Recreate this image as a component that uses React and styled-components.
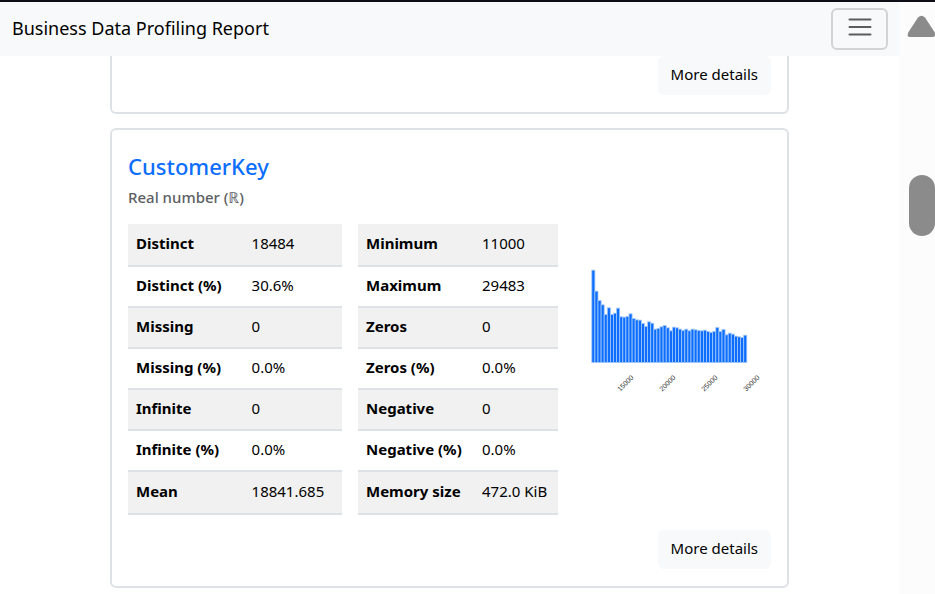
import React from "react";
import styled, { createGlobalStyle } from "styled-components";

const GlobalStyle = createGlobalStyle`
  *, *::before, *::after { box-sizing: border-box; }
  html, body { margin: 0; height: 100%; overflow: hidden; }
  body {
    background: #fff;
    color: #000;
    font-family: "Segoe UI", "Noto Sans", "DejaVu Sans", sans-serif;
    font-size: 15px;
    line-height: 24px;
  }
`;

const Frame = styled.div`
  display: flex;
  height: 100vh;
  border-top: 2px solid #0e0e16;
  overflow: hidden;
`;

const Page = styled.div`
  flex: 1;
  min-width: 0;
`;

const Navbar = styled.header`
  display: flex;
  align-items: center;
  justify-content: space-between;
  height: 54px;
  padding: 0 11px 0 12px;
  background: #f8f9fa;
`;

const Brand = styled.a`
  padding-bottom: 2px;
  color: #000;
  font-size: 18px;
  text-decoration: none;
`;

const MenuButton = styled.button`
  display: flex;
  align-items: center;
  justify-content: center;
  width: 57px;
  height: 42px;
  padding: 0 0 4px;
  border: 2px solid #d2d3d4;
  border-radius: 6px;
  background: transparent;
`;

const Content = styled.main`
  display: flex;
  flex-direction: column;
  gap: 14px;
  padding: 0 110px;
`;

const Card = styled.section`
  display: flex;
  flex-direction: column;
  padding: ${(p) => (p.$continued ? "0 16px 17px" : "22px 16px 17px")};
  border: 2px solid #dee2e6;
  border-top-width: ${(p) => (p.$continued ? "0" : "2px")};
  border-radius: ${(p) => (p.$continued ? "0 0 6px 6px" : "6px")};
`;

const DetailsButton = styled.button`
  align-self: flex-end;
  height: 39px;
  padding: 0 13px 4px;
  border: 0;
  border-radius: 6px;
  background: #f8f9fa;
  color: #000;
  font: inherit;
`;

const VariableName = styled.h2`
  margin: 0;
  font-size: 22px;
  font-weight: 500;
  line-height: 28px;

  a { color: #0d6efd; text-decoration: none; }
`;

const VariableType = styled.p`
  margin: 5px 0 15px;
  color: #5c6064;
  font-weight: 500;
  line-height: 24px;
`;

const Columns = styled.div`
  display: grid;
  grid-template-columns: 214fr 200fr 197fr;
  gap: 16px;
  align-items: start;
  margin-bottom: 15px;
`;

const StatsTable = styled.table`
  width: 100%;
  border-collapse: separate;
  border-spacing: 0;
  table-layout: fixed;

  th, td {
    height: 41px;
    padding: 0 8px 4px;
    border-bottom: 2px solid #dee2e6;
    text-align: left;
    vertical-align: middle;
    white-space: nowrap;
  }
  th { width: ${(p) => p.$labelWidth}; font-weight: 700; }
  tr:nth-child(odd) > * { background: #f1f1f1; }
  tr:first-child > *, tr:last-child > * { height: 43px; }
`;

const Chart = styled.svg`
  display: block;
  width: 100%;
  margin-top: 36px;

  text {
    fill: #333;
    font-family: "Liberation Sans", sans-serif;
    font-size: 7px;
  }
`;

const ScrollTrack = styled.div`
  display: flex;
  flex-direction: column;
  align-items: flex-end;
  gap: 137px;
  width: 36px;
  padding-top: 12px;
  background: #fcfcfc;

  svg { display: block; }
`;

const ScrollThumb = styled.div`
  width: 26px;
  height: 61px;
  border-radius: 13px;
  background: #8b8b8b;
`;

const leftStats = [
  ["Distinct", "18484"],
  ["Distinct (%)", "30.6%"],
  ["Missing", "0"],
  ["Missing (%)", "0.0%"],
  ["Infinite", "0"],
  ["Infinite (%)", "0.0%"],
  ["Mean", "18841.685"],
];

const rightStats = [
  ["Minimum", "11000"],
  ["Maximum", "29483"],
  ["Zeros", "0"],
  ["Zeros (%)", "0.0%"],
  ["Negative", "0"],
  ["Negative (%)", "0.0%"],
  ["Memory size", "472.0 KiB"],
];

// Bin heights, in thirds of a chart unit.
const bins = [
  277, 214, 186, 173, 144, 164, 144, 148, 163, 137, 136, 138, 146, 132, 128,
  127, 117, 108, 122, 118, 100, 102, 107, 111, 104, 95, 106, 104, 100, 96, 100,
  95, 100, 98, 96, 95, 97, 93, 90, 93, 105, 93, 99, 83, 88, 85, 79, 77, 75, 82,
];

const ticks = [
  [60, "15000"],
  [102, "20000"],
  [144, "25000"],
  [186, "30000"],
];

function Stats({ label, rows, labelWidth }) {
  return (
    <StatsTable aria-label={label} $labelWidth={labelWidth}>
      <tbody>
        {rows.map(([name, value]) => (
          <tr key={name}>
            <th scope="row">{name}</th>
            <td>{value}</td>
          </tr>
        ))}
      </tbody>
    </StatsTable>
  );
}

function Histogram() {
  return (
    <Chart viewBox="0 0 197 140" role="img" aria-label="Histogram of CustomerKey">
      {bins.map((h, i) => (
        <rect
          key={i}
          x={17.8 + i * 3.1}
          y={102.5 - h / 3}
          width={3.1}
          height={h / 3}
          fill="#0d6efd"
          stroke="#a5c9fb"
          strokeWidth={0.8}
        />
      ))}
      {ticks.map(([x, text]) => (
        <text key={text} textAnchor="end" transform={`translate(${x} 118) rotate(-45)`}>
          {text}
        </text>
      ))}
    </Chart>
  );
}

export default function App() {
  return (
    <>
      <GlobalStyle />
      <Frame>
        <Page>
          <Navbar>
            <Brand href="#top">Business Data Profiling Report</Brand>
            <MenuButton type="button" aria-label="Toggle navigation">
              <svg width="26" height="20" viewBox="0 0 26 20" fill="none" stroke="#5b5c5d" strokeWidth="2" strokeLinecap="round">
                <path d="M2.5 2.5h21M2.5 10h21M2.5 17.5h21" />
              </svg>
            </MenuButton>
          </Navbar>
          <Content>
            <Card $continued>
              <DetailsButton type="button">More details</DetailsButton>
            </Card>
            <Card>
              <VariableName><a href="#CustomerKey">CustomerKey</a></VariableName>
              <VariableType>Real number (ℝ)</VariableType>
              <Columns>
                <Stats label="Summary" rows={leftStats} labelWidth="54%" />
                <Stats label="Range" rows={rightStats} labelWidth="58%" />
                <Histogram />
              </Columns>
              <DetailsButton type="button">More details</DetailsButton>
            </Card>
          </Content>
        </Page>
        <ScrollTrack aria-hidden="true">
          <svg width="28" height="24" viewBox="0 0 28 24">
            <path d="M11 3.500Q14.500 0 18 3.500L27.500 18Q29.500 23 25 23H3.500Q-1 23 1.500 18Z" fill="#8b8b8b" />
          </svg>
          <ScrollThumb />
        </ScrollTrack>
      </Frame>
    </>
  );
}
